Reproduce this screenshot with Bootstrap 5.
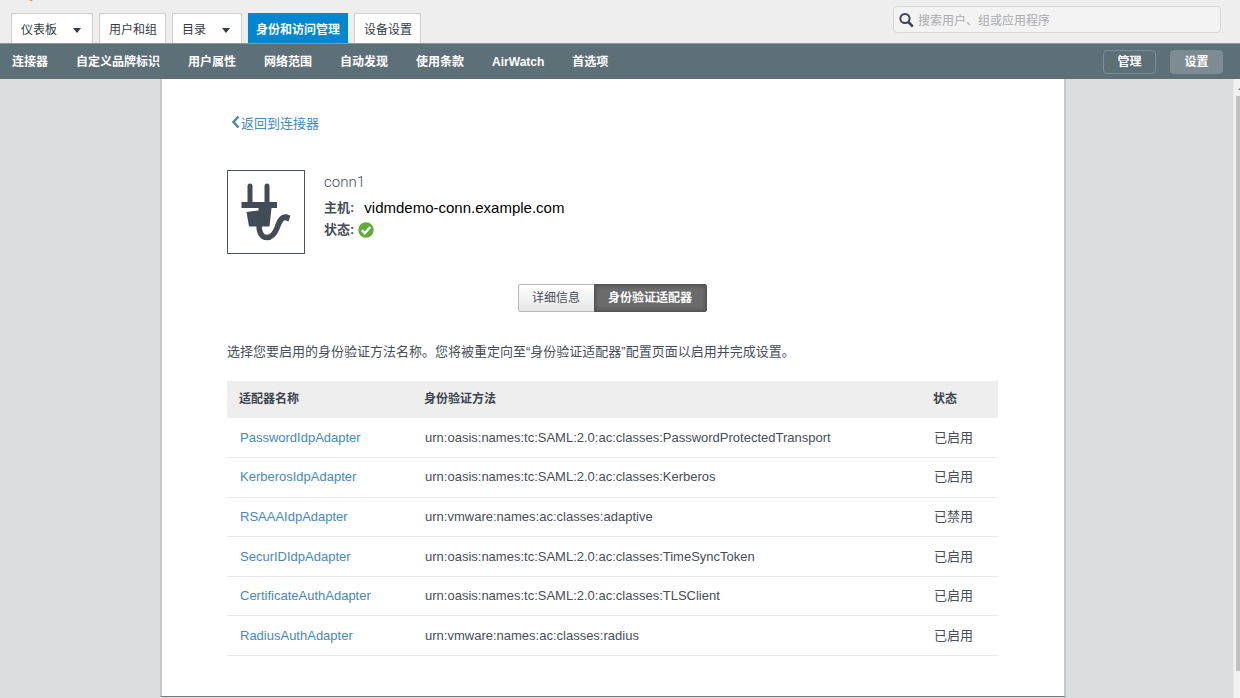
<!DOCTYPE html>
<html lang="zh-CN">
<head>
<meta charset="utf-8">
<meta name="viewport" content="width=device-width, initial-scale=1">
<title>身份和访问管理</title>
<link href="https://cdn.jsdelivr.net/npm/bootstrap@5.3.0/dist/css/bootstrap.min.css" rel="stylesheet">
<style>
body{font:13px/20px "Liberation Sans","Noto Sans CJK SC",sans-serif;color:#464e57;background:#dcdddf}
a{text-decoration:none}
.top-bar{background:#eee;height:43px}
.brand-tip{top:0;left:28px}
.main-tabs{gap:6px;padding-left:11px}
.main-tab{height:30px;padding:3px 8px 0 9px;border:1px solid #d0d0d0;border-bottom:0;background:#fff;color:#333b44;font-size:12px;line-height:20px;white-space:nowrap}
.main-tab.current{background:#0087cf;border-color:#0087cf;color:#fff;font-weight:bold;padding:3px 7px 0}
.caret{margin-left:16px;margin-right:3px;border:4px solid transparent;border-top:5px solid #333b44;border-bottom:0}
.search-box{width:328px;height:27px;margin:6px 19px 0 0;border:1px solid #d5d7d8;border-radius:4px;background:#f3f3f3;padding:0 5px}
.search-box input{border:0;outline:0;background:transparent;font-size:12px;min-width:0;padding:2px 0 0}
.search-box input::placeholder{color:#a9abad;opacity:1}
.sub-bar{background:#5e7077;height:36px;border-top:1px solid #8c999d;padding:0 17px 0 12px}
.sub-links{gap:28px}
.sub-links a{color:#fff;font-size:12px;font-weight:bold;white-space:nowrap}
.sub-btns{gap:14px}
.sub-btn{width:53px;height:24px;border:1px solid #7d8c92;border-radius:4px;background:transparent;color:#fff;font-size:12px;font-weight:bold;line-height:20px;padding:0}
.sub-btn.current{background:#7d8c92}
.page-area{padding-right:7px}
.sheet{width:906px;background:#fff;border:solid #c6c7c8;border-width:0 2px;border-bottom:1px solid #777;margin-bottom:1px;padding:35px 66px 39px 65px}
.scroll-strip{width:7px;background:#f1f1f1;border-left:1px solid #e8e8e8;padding:17px 0 27px 2px}
.scroll-thumb{background:#c1c1c1}
.scroll-arrow{top:8px;left:4px}
.sheet a{color:#4688c0}
.back-link{gap:1px;padding-left:4px}
.conn-box{margin-top:35px;gap:19px}
.conn-icon{width:78px;height:84px;border:1px solid #4a525b}
.conn-name{font:300 15px/24px Roboto,sans-serif}
.host-name{color:#000;font-size:15px;margin-left:10px}
.state-row{gap:4px;padding-top:2px}
.view-switch{margin-top:30px}
.switch-btn{height:28px;border:1px solid #b8b8b8;background:linear-gradient(#fff,#e6e6e6);color:#464e57;font-size:12px;padding:0 14px 0 13px;border-radius:2px 0 0 2px}
.switch-btn.current{background:#6b6b6b;border-color:#555;color:#fff;font-weight:bold;border-radius:0 2px 2px 0;box-shadow:inset 0 0 4px #444;margin-left:-1px}
.hint{margin:30px 0 19px}
.adapters{table-layout:fixed;width:100%;height:275px}
.adapters th{background:#eee;height:37px;padding:0 12px 2px;font-size:12px;color:#3c444d}
.adapters td{height:39px;padding:0 13px;border-bottom:1px solid #e9e9e9;white-space:nowrap}
</style>
</head>
<body>
<div class="d-flex flex-column min-vh-100">
<header>
 <div class="top-bar d-flex justify-content-between align-items-start position-relative">
  <svg class="brand-tip position-absolute" width="6" height="2" viewBox="0 0 6 2"><path d="M1 0h4L3 1z" fill="#f0643c"/></svg>
  <nav class="main-tabs d-flex align-self-end" aria-label="主导航">
   <button class="main-tab d-flex align-items-center" type="button">仪表板<span class="caret"></span></button>
   <a class="main-tab d-flex align-items-center" href="#">用户和组</a>
   <button class="main-tab d-flex align-items-center" type="button">目录<span class="caret"></span></button>
   <a class="main-tab current d-flex align-items-center" href="#">身份和访问管理</a>
   <a class="main-tab d-flex align-items-center" href="#">设备设置</a>
  </nav>
  <label class="search-box d-flex align-items-center gap-1">
   <svg class="flex-shrink-0" width="15" height="16" viewBox="0 0 15 16" fill="none" stroke="#3d4650"><circle cx="6" cy="6.5" r="4.6" stroke-width="2"/><path d="M9.4 10l4.4 4.6" stroke-width="2.6"/></svg>
   <input class="flex-grow-1" type="search" placeholder="搜索用户、组或应用程序" aria-label="搜索">
  </label>
 </div>
 <div class="sub-bar d-flex justify-content-between align-items-center">
  <nav class="sub-links d-flex" aria-label="子导航">
   <a href="#">连接器</a><a href="#">自定义品牌标识</a><a href="#">用户属性</a><a href="#">网络范围</a><a href="#">自动发现</a><a href="#">使用条款</a><a href="#">AirWatch</a><a href="#">首选项</a>
  </nav>
  <div class="sub-btns d-flex"><button class="sub-btn" type="button">管理</button><button class="sub-btn current" type="button">设置</button></div>
 </div>
</header>
<div class="d-flex flex-grow-1">
 <div class="page-area flex-grow-1 d-flex justify-content-center">
 <main class="sheet">
  <a class="back-link d-inline-flex align-items-center" href="#"><svg width="9" height="14" viewBox="0 0 9 14" class="mb-1"><path d="M7.500 1.500L2.500 7l5 5.500" fill="none" stroke="#4688c0" stroke-width="2.600"/></svg>返回到连接器</a>
  <section class="conn-box d-flex">
   <div class="conn-icon flex-shrink-0"><svg width="76" height="82" viewBox="0 0 76 82" fill="#434c56"><rect x="19.500" y="12.500" width="5" height="22" rx="2.500"/><rect x="36.500" y="12.500" width="5" height="22" rx="2.500"/><path d="M13.500 31H49v6h-5.500l-2 18.500H21L18.500 41l12-1.500V37h-17z"/><path d="M31 54c0 8 3 12.500 8 12.500 5.500 0 8-4.500 10-9.500 2.500-7 5-12.500 11-10.500" fill="none" stroke="#434c56" stroke-width="5.500"/><path d="M57 43.500l5.500 1-2 6-4-1.500z"/></svg></div>
   <div>
    <div class="conn-name">conn1</div>
    <div class="d-flex pt-1"><strong>主机:</strong><span class="host-name">vidmdemo-conn.example.com</span></div>
    <div class="state-row d-flex align-items-center"><strong>状态:</strong><svg width="16" height="16" viewBox="0 0 16 16" role="img" aria-label="正常"><circle cx="8" cy="8" r="7.700" fill="#5fad38"/><path d="M3.800 8.200l3 3L12.200 5" fill="none" stroke="#fff" stroke-width="2.400"/></svg></div>
   </div>
  </section>
  <div class="view-switch d-flex justify-content-center"><button class="switch-btn" type="button">详细信息</button><button class="switch-btn current" type="button">身份验证适配器</button></div>
  <p class="hint">选择您要启用的身份验证方法名称。您将被重定向至“身份验证适配器”配置页面以启用并完成设置。</p>
  <table class="adapters">
   <colgroup><col style="width:24%"><col style="width:66%"><col style="width:10%"></colgroup>
   <thead><tr><th scope="col">适配器名称</th><th scope="col">身份验证方法</th><th scope="col">状态</th></tr></thead>
   <tbody>
    <tr><td><a href="#">PasswordIdpAdapter</a></td><td>urn:oasis:names:tc:SAML:2.0:ac:classes:PasswordProtectedTransport</td><td>已启用</td></tr>
    <tr><td><a href="#">KerberosIdpAdapter</a></td><td>urn:oasis:names:tc:SAML:2.0:ac:classes:Kerberos</td><td>已启用</td></tr>
    <tr><td><a href="#">RSAAAIdpAdapter</a></td><td>urn:vmware:names:ac:classes:adaptive</td><td>已禁用</td></tr>
    <tr><td><a href="#">SecurIDIdpAdapter</a></td><td>urn:oasis:names:tc:SAML:2.0:ac:classes:TimeSyncToken</td><td>已启用</td></tr>
    <tr><td><a href="#">CertificateAuthAdapter</a></td><td>urn:oasis:names:tc:SAML:2.0:ac:classes:TLSClient</td><td>已启用</td></tr>
    <tr><td><a href="#">RadiusAuthAdapter</a></td><td>urn:vmware:names:ac:classes:radius</td><td>已启用</td></tr>
   </tbody>
  </table>
 </main>
 </div>
 <div class="scroll-strip d-flex position-relative"><svg class="scroll-arrow position-absolute" width="3" height="3" viewBox="0 0 3 3"><path d="M0 3l3-3v3z" fill="#777"/></svg><div class="scroll-thumb flex-grow-1"></div></div>
</div>
</div>
<script src="https://cdn.jsdelivr.net/npm/bootstrap@5.3.0/dist/js/bootstrap.bundle.min.js"></script>
</body>
</html>
